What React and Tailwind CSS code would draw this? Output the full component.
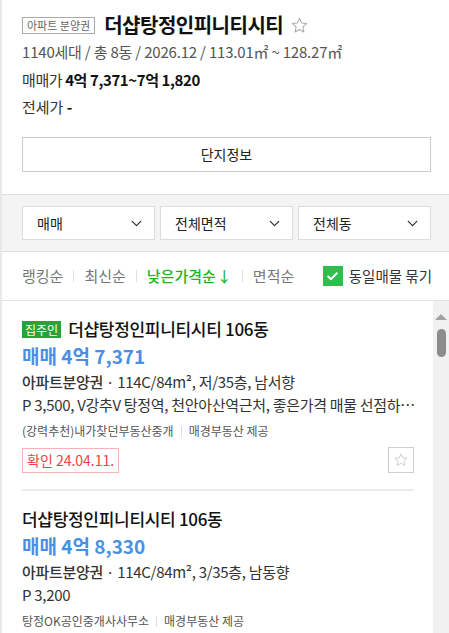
import { ChevronDown, Check } from 'lucide-react';

const font = { fontFamily: '"Noto Sans CJK KR", "Noto Sans", sans-serif' };

const Star = ({ className }) => (
  <svg viewBox="0 0 24 24" className={className} fill="none" stroke="currentColor" strokeWidth="1.3" strokeLinejoin="round">
    <path d="M12 2.8l2.7 5.9 6.4.7-4.8 4.4 1.3 6.4L12 17l-5.6 3.2 1.3-6.4-4.8-4.4 6.4-.7z" />
  </svg>
);

const Select = ({ label }) => (
  <div className="flex-1 h-[34px] bg-white border border-[#dcdcdc] flex items-center justify-between pl-[14px] pr-[9px] text-[14px] text-[#222]">
    <span>{label}</span>
    <ChevronDown className="w-[17px] h-[17px] text-[#333]" strokeWidth={1.8} />
  </div>
);

const Listing = ({ owner, price, info, desc, agency, confirm }) => (
  <div className="pt-[16px]">
    <div className="flex items-center h-[24px]">
      {owner && (
        <span className="bg-[#26a43c] text-white text-[12px] leading-[17px] px-[3px] mr-[7px]">집주인</span>
      )}
      <span className="text-[17px] text-[#111] font-medium tracking-[-0.3px]">더샵탕정인피니티시티 106동</span>
    </div>
    <div className="text-[19px] leading-[28px] font-bold text-[#4a90e2] mt-[1px]">{price}</div>
    <div className="text-[15px] leading-[23px] text-[#333] tracking-[-0.3px]">
      <span className="font-medium">아파트분양권</span> · 114C/84m², {info}
    </div>
    <div className="text-[15px] leading-[23px] text-[#333] tracking-[-0.3px] whitespace-nowrap">{desc}</div>
    <div className="text-[12px] leading-[20px] text-[#555] mt-[5px] flex items-center">
      <span>{agency}</span>
      <span className="w-px h-[11px] bg-[#ddd] mx-[7px]" />
      <span>매경부동산 제공</span>
    </div>
    {confirm && (
      <div className="flex items-center justify-between mt-[6px] pb-[16px] border-b-2 border-[#ebebeb]">
        <span className="border border-[#f6b4b8] text-[#e8414a] text-[14px] leading-[23px] px-[4px]">확인 24.04.11.</span>
        <span className="w-[26px] h-[26px] border border-[#cfcfcf] flex items-center justify-center">
          <Star className="w-[16px] h-[16px] text-[#c8c8c8]" />
        </span>
      </div>
    )}
  </div>
);

export default function App() {
  return (
    <div style={font} className="w-[449px] h-[633px] overflow-hidden bg-white border-l-2 border-[#e8e8e8] flex flex-col">
      <div className="pl-[20px] pr-[18px] pt-[12px] pb-[22px]">
        <div className="flex items-center h-[26px]">
          <span className="border border-[#aaa] text-[#666] text-[11px] leading-[15px] px-[4px] mr-[9px]">아파트 분양권</span>
          <span className="text-[20px] font-bold text-[#111] tracking-[-0.5px]">더샵탕정인피니티시티</span>
          <Star className="w-[19px] h-[19px] text-[#aaa] ml-[7px]" />
        </div>
        <div className="text-[15px] text-[#555] leading-[22px] mt-[3px] tracking-[-0.2px]">1140세대 / 총 8동 / 2026.12 / 113.01㎡ ~ 128.27㎡</div>
        <div className="text-[15px] text-[#333] leading-[22px] mt-[6px] tracking-[-0.4px]">
          매매가 <span className="font-bold text-[#111]">4억 7,371~7억 1,820</span>
        </div>
        <div className="text-[15px] text-[#333] leading-[22px] mt-[5px]">
          전세가 <span className="font-bold text-[#111]">-</span>
        </div>
        <div className="mt-[19px] h-[35px] border border-[#ccc] flex items-center justify-center text-[14px] text-[#222]">단지정보</div>
      </div>

      <div className="bg-[#f4f4f4] border-y border-[#ddd] pl-[20px] pr-[18px] py-[11px] flex gap-[5px]">
        <Select label="매매" />
        <Select label="전체면적" />
        <Select label="전체동" />
      </div>

      <div className="pl-[20px] pr-[17px] h-[49px] flex items-center justify-between border-b border-[#e3e3e3]">
        <div className="flex items-center text-[15px] text-[#777]">
          <span>랭킹순</span>
          <span className="w-px h-[12px] bg-[#e0e0e0] mx-[10px]" />
          <span>최신순</span>
          <span className="w-px h-[12px] bg-[#e0e0e0] mx-[10px]" />
          <span className="text-[#1eb41e] font-medium">낮은가격순<span className="ml-[1px]">↓</span></span>
          <span className="w-px h-[12px] bg-[#e0e0e0] mx-[10px]" />
          <span>면적순</span>
        </div>
        <div className="flex items-center text-[14.5px] text-[#333]">
          <span className="w-[20px] h-[20px] bg-[#2fbd4b] flex items-center justify-center mr-[6px]">
            <Check className="w-[13px] h-[13px] text-white" strokeWidth={3.5} />
          </span>
          동일매물 묶기
        </div>
      </div>

      <div className="flex flex-1 min-h-0">
        <div className="flex-1 min-w-0 pl-[20px] pr-[19px] overflow-hidden">
          <Listing
            owner
            price="매매 4억 7,371"
            info="저/35층, 남서향"
            desc="P 3,500, V강추V 탕정역, 천안아산역근처, 좋은가격 매물 선점하…"
            agency="(강력추천)내가찾던부동산중개"
            confirm
          />
          <Listing
            price="매매 4억 8,330"
            info="3/35층, 남동향"
            desc="P 3,200"
            agency="탕정OK공인중개사사무소"
          />
        </div>
        <div className="w-[16px] bg-[#f1f1f1] flex flex-col items-center pt-[13px]">
          <span className="w-0 h-0 border-l-[6px] border-r-[6px] border-b-[6px] border-l-transparent border-r-transparent border-b-[#a3a3a3]" />
          <span className="mt-[9px] w-[9px] h-[28px] rounded-full bg-[#8c8c8c]" />
        </div>
      </div>
    </div>
  );
}
